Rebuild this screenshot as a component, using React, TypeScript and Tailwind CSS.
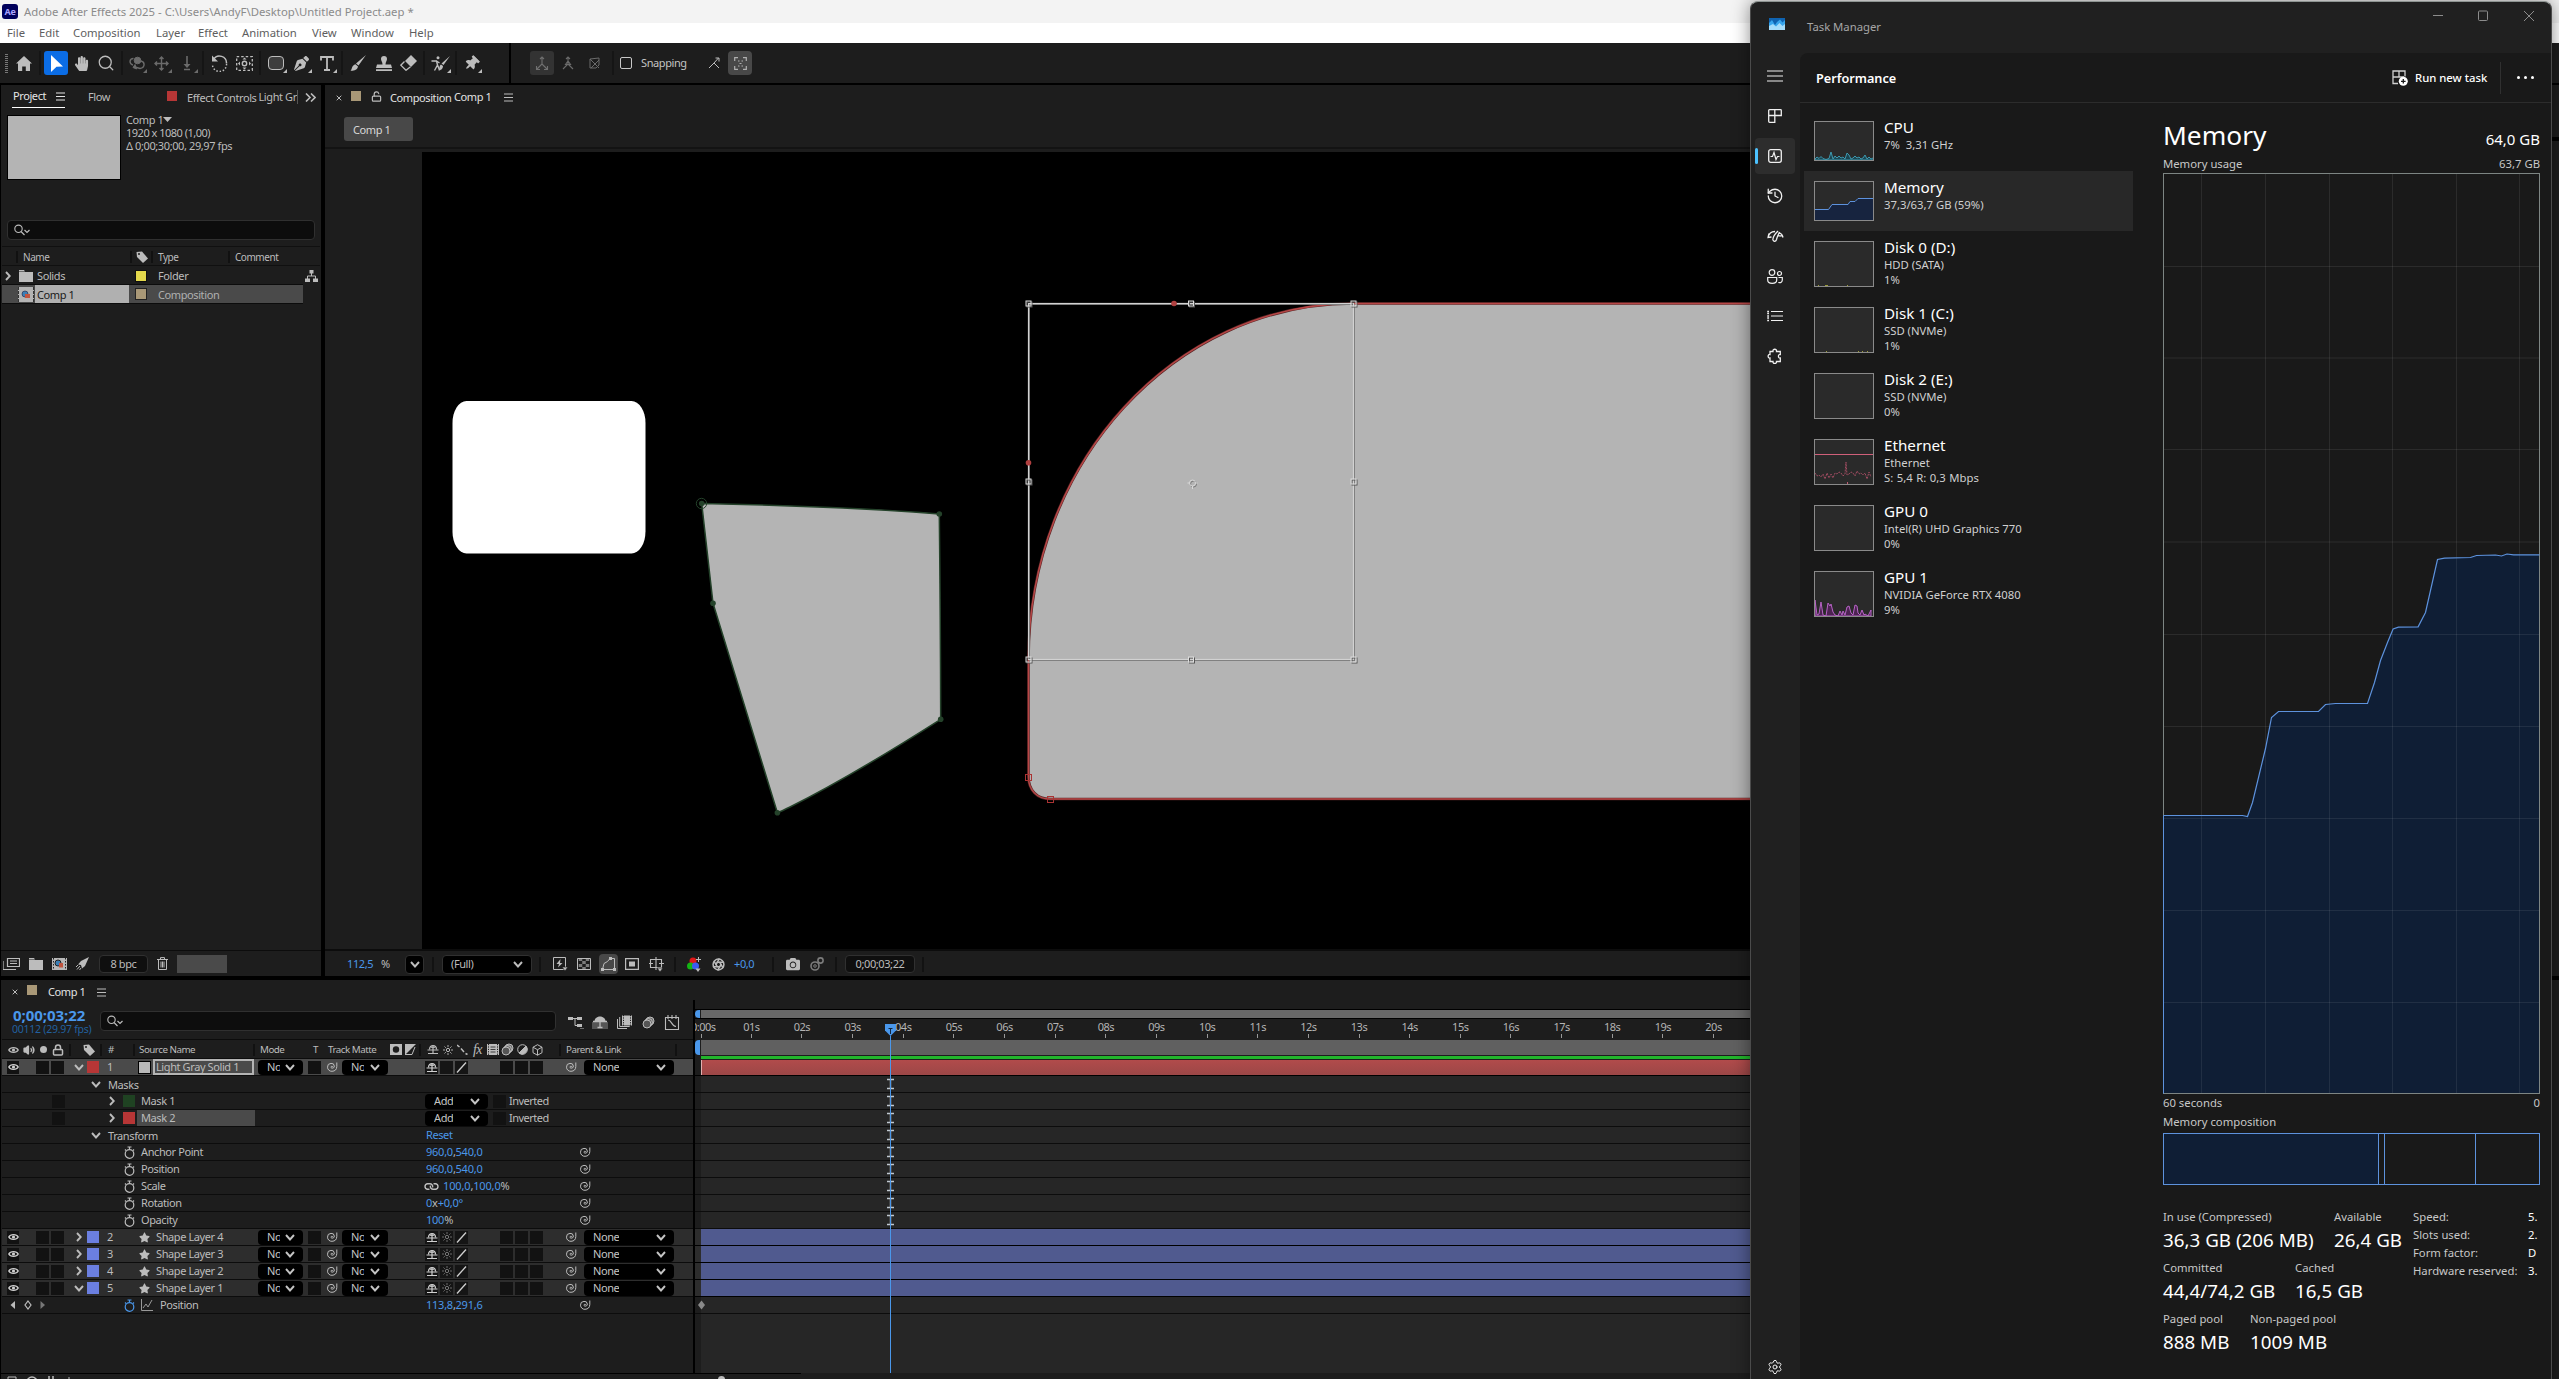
import type { ReactNode } from 'react';
import { FaHandPaper, FaPenNib, FaThumbtack, FaStar, FaCamera } from 'react-icons/fa';
import { Search, History, Settings, LockOpen, Lock, Volume2, Aperture, Link as LinkIcon } from 'lucide-react';

/* ---------- small shared pieces ---------- */

function Svg({ w, h, children }: { w: number; h: number; children: ReactNode }) {
  return (
    <svg width={w} height={h} viewBox={`0 0 ${w} ${h}`} fill="none" stroke="currentColor" className="block shrink-0">
      {children}
    </svg>
  );
}

const Menu3 = () => (
  <Svg w={9} h={9}><path d="M0 1h9M0 4.5h9M0 8h9" /></Svg>
);

const Tag = () => (
  <Svg w={12} h={12}>
    <path d="M0.5 1 L6 0.5 L12 7.5 L7 12 L1 6z" fill="currentColor" stroke="none" />
    <circle cx="3" cy="3" r="1" fill="#1d1d1d" stroke="none" />
  </Svg>
);

const Whip = () => (
  <Svg w={12} h={12}>
    <path d="M6.8 6.2a.9.9 0 1 0-1.2.8c1.6.6 2.9-.5 2.7-2A2.9 2.9 0 0 0 5 2.4 3.6 3.6 0 0 0 1.5 6.2 4.2 4.2 0 0 0 6 10.3 5 5 0 0 0 10.8 5.5V1.5" />
  </Svg>
);

const Eye = () => (
  <Svg w={11} h={10}>
    <path d="M0.8 5C2.5 1.8 8.5 1.8 10.2 5 8.5 8.2 2.5 8.2 0.8 5z" strokeWidth="1.4" />
    <circle cx="5.5" cy="5" r="1.6" fill="currentColor" stroke="none" />
  </Svg>
);

const Shy = () => (
  <Svg w={12} h={11}>
    <path d="M2.5 5.5C2.5 0.2 9.5 0.2 9.5 5.5" strokeWidth="1.2" />
    <path d="M0.5 6h11M6 1.5v7.5M1 9.5h10" strokeWidth="1.2" />
    <path d="M4 3.3h4" />
  </Svg>
);

const Sun = () => (
  <Svg w={10} h={10}>
    <circle cx="5" cy="5" r="1.7" />
    <path d="M5 0v2M5 8v2M0 5h2M8 5h2M1.5 1.5l1.3 1.3M7.2 7.2l1.3 1.3M8.5 1.5L7.2 2.8M2.8 7.2L1.5 8.5" strokeWidth=".9" />
  </Svg>
);

const Slash = () => (
  <Svg w={11} h={11}><path d="M1 10.5L10 0.5" strokeWidth="1.3" /></Svg>
);

const Film = () => (
  <Svg w={12} h={11}>
    <path d="M0 0h12v11H0z" fill="currentColor" stroke="none" />
    <path d="M1.5 0v11M10.5 0v11" stroke="#1d1d1d" strokeDasharray="1.2 1.2" />
    <path d="M3.5 3h5M3.5 5.5h5M3.5 8h5" stroke="#1d1d1d" strokeWidth=".8" />
  </Svg>
);

const Rings = () => (
  <Svg w={13} h={13}>
    <circle cx="8" cy="5" r="4" fill="#6b6b6b" />
    <circle cx="6.5" cy="6.5" r="4" />
    <circle cx="5" cy="8" r="4" fill="#555" />
  </Svg>
);

const Watch = () => (
  <Svg w={11} h={13}>
    <circle cx="5.5" cy="8" r="4.3" strokeWidth="1.2" />
    <path d="M5.5 3.5V1M3.5 1h4M1 3.5l1 1M10 3.5l-1 1" strokeWidth="1.2" />
  </Svg>
);

const Net = () => (
  <Svg w={13} h={12}>
    <path d="M4.5 0h4v3.5h-4zM0 8.5h5V12H0zM8 8.5h5V12H8z" fill="currentColor" stroke="none" />
    <path d="M6.5 3v3M2.5 9V6h8v3" />
  </Svg>
);

const Folder = () => (
  <Svg w={14} h={12}><path d="M0 0h5l1 1.5H0zM0 2h14v10H0z" fill="currentColor" stroke="none" /></Svg>
);

const Cross = () => (
  <Svg w={6} h={6}><path d="M.7.7l4.6 4.6M5.3.7L.7 5.3" /></Svg>
);

const Check = ({ className = '' }: { className?: string }) => <div className={`h-[13px] w-[13px] bg-[#121212] ${className}`} />;

const Chev = () => (
  <Svg w={10} h={7}><path d="M1 1l4 4.5L9 1" strokeWidth="1.9" /></Svg>
);

const ChevR = () => (
  <Svg w={6} h={10}><path d="M1 1l3.8 4L1 9" strokeWidth="1.9" /></Svg>
);

const Find = () => (
  <Svg w={17} h={12}>
    <circle cx="4.5" cy="4.8" r="3.7" strokeWidth="1.1" />
    <path d="M7 7.5l3.5 3.5M10.5 6l2.5 2.5L15.5 6" strokeWidth="1.2" />
  </Svg>
);

/* ---------- title, menu, toolbar ---------- */

const menus = [
  { label: 'File', w: 'w-[32px]' },
  { label: 'Edit', w: 'w-[34px]' },
  { label: 'Composition', w: 'w-[83px]' },
  { label: 'Layer', w: 'w-[42px]' },
  { label: 'Effect', w: 'w-[44px]' },
  { label: 'Animation', w: 'w-[70px]' },
  { label: 'View', w: 'w-[39px]' },
  { label: 'Window', w: 'w-[58px]' },
  { label: 'Help', w: 'w-[40px]' },
];

function Tool({ w, dim, more, on, children }: { w: string; dim?: boolean; more?: boolean; on?: boolean; children: ReactNode }) {
  return (
    <div className={`relative flex h-6 items-center justify-center ${w} ${on ? 'rounded-[3px] bg-[#0b6de6] text-white' : dim ? 'text-[#6b6b6b]' : 'text-[#bdbdbd]'}`}>
      {children}
      {more && (
        <span className="absolute right-[2px] bottom-[2px] border-b-4 border-l-4 border-b-current border-l-transparent" />
      )}
    </div>
  );
}

const ToolSep = ({ w }: { w: string }) => (
  <div className={`flex justify-center ${w}`}><div className="h-6 w-[2px] bg-[#151515]" /></div>
);

function Toolbar() {
  return (
    <div className="flex h-10 items-center bg-[#1d1d1d] *:shrink-0">
      <div className="flex w-3 justify-center">
        <Svg w={3} h={19}><path d="M1.5 0v19" strokeWidth="3" stroke="#777" strokeDasharray="1 1" /></Svg>
      </div>
      <Tool w="w-6"><Svg w={16} h={15}><path d="M8 0L16 7.5h-2V15H9.8v-4.5H6.2V15H2V7.5H0z" fill="currentColor" stroke="none" /></Svg></Tool>
      <ToolSep w="w-2" />
      <Tool w="w-6" on><Svg w={13} h={17}><path d="M1 0l12 11.5-6.5.3L1 17z" fill="currentColor" stroke="none" /></Svg></Tool>
      <Tool w="w-[26px]"><FaHandPaper size={15} /></Tool>
      <Tool w="w-[24px]"><Search size={18} strokeWidth={1.7} /></Tool>
      <ToolSep w="w-[7px]" />
      <Tool w="w-6" dim more>
        <Svg w={17} h={14}>
          <path d="M4 9C0 8 0 2.5 4.5 2.5M12 5c4 1 4.5 6.5-1 7.5L6 11" strokeWidth="1.4" />
          <circle cx="8.5" cy="4.5" r="3.3" fill="currentColor" /><path d="M6 8.5l-2 3 3.5 1.5z" fill="currentColor" />
        </Svg>
      </Tool>
      <Tool w="w-[25px]" dim more>
        <Svg w={15} h={15}><path d="M7.5 1v13M1 7.5h13M5.5 3l2-2 2 2M5.5 12l2 2 2-2M3 5.5l-2 2 2 2M12 5.5l2 2-2 2" strokeWidth="1.4" /></Svg>
      </Tool>
      <Tool w="w-[26px]" dim more>
        <Svg w={10} h={15}><path d="M5 0v11M2 13.5h6" strokeWidth="1.6" /><path d="M1.5 8L5 12l3.5-4z" fill="currentColor" stroke="none" /></Svg>
      </Tool>
      <ToolSep w="w-[6px]" />
      <Tool w="w-[26px]">
        <Svg w={17} h={17}>
          <path d="M2.5 4.5A7 7 0 0 1 15.5 8.5" strokeWidth="1.5" /><path d="M15.5 9A7 7 0 0 1 1.5 10" strokeWidth="1.5" strokeDasharray="1.5 1.8" />
          <path d="M1 0.5v6h6z" fill="currentColor" stroke="none" />
        </Svg>
      </Tool>
      <Tool w="w-[25px]">
        <Svg w={17} h={15}>
          <path d="M.7.7h15.6v13.6H.7z" strokeDasharray="2.5 2" strokeWidth="1.3" />
          <circle cx="8.5" cy="7.5" r="2.2" strokeWidth="1.4" />
          <path d="M6.5 3.5l2-2 2 2zM6.5 11.5l2 2 2-2zM4 5.5l-2 2 2 2zM13 5.5l2 2-2 2z" fill="currentColor" stroke="none" />
        </Svg>
      </Tool>
      <ToolSep w="w-[6px]" />
      <Tool w="w-[26px]" more><div className="h-[14px] w-4 rounded-[4px] border border-[#bdbdbd] bg-[#3d3d3d]" /></Tool>
      <Tool w="w-[25px]" more><FaPenNib size={15} /></Tool>
      <Tool w="w-[25px]" more><Svg w={14} h={15}><path d="M1 4.5V1h12v3.5M7 1v13M4 14h6" strokeWidth="1.8" /></Svg></Tool>
      <ToolSep w="w-[6px]" />
      <Tool w="w-[26px]"><Svg w={16} h={16}><path d="M16 0L8.5 10.5 6 8.5z M5.5 9.2l2.5 2.3C7.5 15 4 16 0.5 15.8 2 14.5 1.8 10 5.5 9.2z" fill="currentColor" stroke="none" /></Svg></Tool>
      <Tool w="w-[25px]"><Svg w={16} h={15}><path d="M5 3a3 3 0 1 1 6 0c0 1.5-1.5 3-1.500 5.500H15L16 12H0l1-3.500h5.500C6.500 6 5 4.500 5 3zM0 13.300h16V15H0z" fill="currentColor" stroke="none" /></Svg></Tool>
      <Tool w="w-[25px]"><Svg w={17} h={16}><path d="M11 0l6 6-6 6-6-6z" fill="currentColor" stroke="none" /><path d="M4.5 6.5L.8 10.2 6 15.3l4.5-3.5" strokeWidth="1.3" /></Svg></Tool>
      <ToolSep w="w-[6px]" />
      <Tool w="w-[26px]" more>
        <Svg w={19} h={15}>
          <circle cx="7" cy="1.8" r="1.5" fill="currentColor" stroke="none" />
          <path d="M0.5 5h5l1 4-3 5.5M6.5 9l2 5M5.5 5l3 2" strokeWidth="1.4" />
          <path d="M19 0L12.5 9 10.5 7.5zM10 8.5l2 1.5c0 3-2.5 4.5-4.5 4.5 1-1.5.5-5 2.5-6z" fill="currentColor" stroke="none" />
        </Svg>
      </Tool>
      <ToolSep w="w-[6px]" />
      <Tool w="w-[25px]" more><div className="rotate-45"><FaThumbtack size={15} /></div></Tool>
      <div className="ml-[25px] h-10 w-[2px] bg-black" />
      <div className="ml-[19px] flex h-6 w-6 items-center justify-center rounded-[3px] bg-[#333] text-[#707070]">
        <Svg w={14} h={14}><path d="M7 1v7L2 13M7 8l5 5M5 3l2-2 2 2M1.5 10v3.5H5M9 13.5h3.5V10" strokeWidth="1.1" /></Svg>
      </div>
      <Tool w="w-7" dim><Svg w={14} h={14}><path d="M7 1v7L2 13M7 8l5 5M4.5 8.5L7 5l2.5 3.5zM5 3l2-2 2 2" strokeWidth="1.1" /></Svg></Tool>
      <Tool w="w-6" dim><Svg w={13} h={14}><path d="M2 3l9 9M11 4l-8 8M2 3v9h6l3-3V2z" strokeWidth="1" /></Svg></Tool>
      <ToolSep w="w-[14px]" />
      <div className="h-3 w-3 rounded-[2px] border-[1.5px] border-[#c8c8c8]" />
      <span className="ml-[9px] w-[46px] text-[11px] tracking-[-0.4px] text-[#c4c4c4]">Snapping</span>
      <Tool w="w-[54px]"><Svg w={12} h={12}><path d="M1 11l5-5 5 5M6 6l4.5-5M7.5 1h3.5v3.5" /></Svg></Tool>
      <div className="-ml-[13px] flex h-6 w-6 items-center justify-center rounded-[4px] bg-[#484848] text-[#b0b0b0]">
        <Svg w={13} h={13}>
          <path d="M.7 4V.7H4M9 .7h3.3V4M12.3 9v3.3H9M4 12.3H.7V9M4 4h1.5M7.5 4H9M4 9h1.5M7.5 9H9M5.5 6.5h2" strokeWidth="1.2" />
        </Svg>
      </div>
    </div>
  );
}

/* ---------- project panel ---------- */

const Bar = ({ className = '' }: { className?: string }) => <div className={`h-3 w-[2px] bg-[#111] ${className}`} />;

function ProjectPanel() {
  return (
    <div className="ml-px flex w-80 shrink-0 flex-col bg-[#1d1d1d] text-[11px] leading-[14px] tracking-[-0.4px] whitespace-nowrap text-[#bcbcbc]">
      <div className="flex h-6 items-start *:shrink-0">
        <div className="ml-[11px] flex h-[23px] w-[53px] items-center justify-between border-b border-white pl-px text-[#e6e6e6]">
          <span>Project</span>
          <Menu3 />
        </div>
        <span className="ml-[23px] w-[79px] pt-[5px]">Flow</span>
        <div className="mt-[6px] h-[10px] w-[10px] bg-[#b73636]" />
        <span className="mt-[5px] ml-[10px] w-[111px] overflow-hidden border-r border-[#555]">
          <span className="relative top-px mr-[2px]">Effect Controls</span>Light Gr
        </span>
        <div className="mt-2 ml-[7px]"><Svg w={11} h={9}><path d="M1 0.5l4 4-4 4M6 0.5l4 4-4 4" strokeWidth="1.6" /></Svg></div>
      </div>

      <div className="mt-[6px] flex h-[105px] pl-[6px]">
        <div className="h-[65px] w-[114px] border border-black bg-[#b4b4b4]" />
        <div className="ml-[5px] flex flex-col leading-[13px] tracking-[-0.5px]">
          <span className="mt-[-2px] flex items-center tracking-[-0.4px]">
            Comp 1<Svg w={9} h={5}><path d="M0 0h9L4.5 5z" fill="currentColor" stroke="none" /></Svg>
          </span>
          <span>1920 x 1080 (1,00)</span>
          <span className="tracking-[-0.4px]">Δ 0;00;30;00, 29,97 fps</span>
        </div>
      </div>

      <div className="ml-[6px] flex h-5 w-[308px] items-center rounded-[4px] border border-[#303030] bg-[#0d0d0d] pl-[6px]"><Find /></div>

      <div className="mt-[6px] ml-px flex h-5 w-[318px] items-center border-y border-[#101010] pt-[2px] text-[10px] tracking-[-0.45px] *:shrink-0">
        <Bar className="ml-[14px]" />
        <span className="ml-[5px] w-[107px]">Name</span>
        <Bar />
        <div className="ml-1 w-[15px]"><Tag /></div>
        <Bar />
        <span className="ml-[5px] w-[70px]">Type</span>
        <Bar />
        <span className="ml-[5px]">Comment</span>
      </div>
      <div className="flex h-[18px] items-center pt-px *:shrink-0">
        <div className="ml-[4px] w-[14px]"><ChevR /></div>
        <Folder />
        <span className="ml-1 w-[99px]">Solids</span>
        <div className="h-[10px] w-[10px] bg-[#e3d84b] outline outline-[#101010]" />
        <span className="ml-[12px] w-[147px]">Folder</span>
        <Net />
      </div>
      <div className="ml-px flex h-[20px] w-[301px] items-center border-y border-[#0c0c0c] bg-[#4a4a4a] *:shrink-0">
        <div className="ml-4 flex h-[15px] w-4 items-center justify-center border-x border-dashed border-[#333] bg-[#b4b4b4]">
          <Svg w={10} h={9}><circle cx="4" cy="4" r="3" fill="#3b7fb5" stroke="#224" strokeWidth=".6" /><path d="M4 4h5v4H4z" fill="#c2553f" stroke="none" /></Svg>
        </div>
        <span className="ml-px flex h-[18px] w-[94px] items-center bg-[#b0b0b0] pt-px pl-[2px] text-[#1a1a1a]">Comp 1</span>
        <div className="ml-[7px] h-[10px] w-[10px] bg-[#a99877] outline outline-[#222]" />
        <span className="ml-[12px] pt-px text-[#b0b0b0]">Composition</span>
      </div>

      <div className="mt-auto flex h-[26px] items-center border-t border-[#0c0c0c] *:shrink-0">
        <div className="ml-[2px] w-[26px]"><Svg w={17} h={12}><path d="M4.5.5h12v8h-12zM0 3v8.5h13M7 3h7M7 5.5h7" strokeWidth="1.2" /></Svg></div>
        <div className="w-[23px]"><Folder /></div>
        <div className="w-6"><Svg w={15} h={12}><path d="M0 0h15v12H0z" fill="#b8b8b8" stroke="none" /><path d="M1.5 0v12M13.5 0v12" stroke="#222" strokeDasharray="1.5 1.5" /><circle cx="6" cy="5" r="3" fill="#3b7fb5" stroke="#222" /><path d="M7 5h4v4.5H7z" fill="#c2553f" stroke="none" /></Svg></div>
        <div className="w-[23px]"><Svg w={13} h={13}><path d="M13 0L5 4 2 7.5l3 .5 1 3.5 3-2.5z" fill="currentColor" stroke="none" /><path d="M4 9L1 12.5M2 8l-2 2M5 11l-1.5 2" /></Svg></div>
        <div className="flex h-[18px] w-[49px] items-center justify-center rounded-[4px] border border-[#303030] bg-[#0f0f0f]">8 bpc</div>
        <div className="flex w-[29px] justify-center"><Svg w={11} h={13}><path d="M0 2.5h11M3.5 2V.6h4V2M1.5 2.5v10h8v-10M4 4.5v6M5.5 4.5v6M7 4.5v6" /></Svg></div>
        <div className="h-[18px] w-[50px] bg-[#4a4a4a]" />
      </div>
    </div>
  );
}

/* ---------- composition viewer ---------- */

const greenPts = [[701.7, 503.5], [939.3, 514], [940.7, 719.3], [777.4, 812.7], [713, 603.3]];
const boxPts = [
  [1028.5, 303.5], [1191, 303.5], [1353.5, 303.5],
  [1028.5, 481.5], [1353.5, 481.5],
  [1028.5, 659.5], [1191, 659.5], [1353.5, 659.5],
];
const maskPath = 'M1028.5 777V659.5C1028.5 462.7 1174 303.5 1353.5 303.5H2544V799H1050C1037 799 1028.5 790 1028.5 777z';

function Viewer() {
  return (
    <svg width="2122" height="797" viewBox="422 152 2122 797" fill="none" className="block bg-black">
      <rect x="452.5" y="401" width="193" height="152.5" rx="14" ry="22" fill="#fff" />
      <path d="M701.7 503.5Q840 506 939.3 514Q940.5 620 940.7 719.3Q850 777 790 807Q782 811 777.4 812.7L713 603.3z" fill="#b4b4b4" stroke="#24422a" strokeWidth="1.5" />
      {greenPts.map(([x, y]) => <circle key={x} cx={x} cy={y} r="2.8" fill="#24422a" />)}
      <circle cx="701.5" cy="503.5" r="5.2" stroke="#24422a" />

      <path d={maskPath} fill="#b4b4b4" stroke="#5a2626" strokeWidth="2.6" />
      <path d={maskPath} stroke="#b84747" strokeWidth="1.4" />
      <rect x="1029.5" y="304.5" width="325" height="356" stroke="#777" />
      <rect x="1028.5" y="303.5" width="325" height="356" stroke="#d2d2d2" strokeWidth="1.2" />
      {boxPts.map(([x, y]) => (
        <g key={`${x}-${y}`}>
          <rect x={x - 1.5} y={y - 1.5} width="5" height="5" stroke="#555" />
          <rect x={x - 2.5} y={y - 2.5} width="5" height="5" stroke="#dcdcdc" />
        </g>
      ))}
      <circle cx="1174" cy="303.5" r="2.8" fill="#b04040" />
      <circle cx="1028.5" cy="462.7" r="2.8" fill="#b04040" />
      <rect x="1025.5" y="774.5" width="6" height="6" stroke="#a33" />
      <rect x="1047.5" y="796.5" width="6" height="6" stroke="#a33" />
      <circle cx="1193.5" cy="484" r="3" stroke="#777" />
      <circle cx="1192.5" cy="483" r="3" stroke="#d8d8d8" />
      <path d="M1187.5 483h2M1195.5 483h2M1192.5 486v3" stroke="#d8d8d8" />
    </svg>
  );
}

const FootSep = ({ w }: { w: string }) => (
  <div className={`flex justify-center ${w}`}><div className="h-[15px] w-[2px] bg-[#121212]" /></div>
);
const Slot = ({ children, on }: { children: ReactNode; on?: boolean }) => (
  <div className="flex w-6 justify-center">
    <div className={`flex h-5 w-[19px] items-center justify-center rounded-[4px] ${on ? 'bg-[#484848]' : ''}`}>{children}</div>
  </div>
);

function CompPanel() {
  return (
    <div className="ml-1 flex w-[2219px] shrink-0 flex-col bg-[#1d1d1d] text-[11px] leading-[14px] tracking-[-0.4px] whitespace-nowrap text-[#bcbcbc]">
      <div className="flex h-6 items-center *:shrink-0">
        <div className="ml-[11px] w-[15px] pt-px"><Cross /></div>
        <div className="mb-[2px] h-[10px] w-[10px] bg-[#a99877]" />
        <div className="mb-[2px] ml-[10px] w-[19px]"><LockOpen size={11} strokeWidth={2.6} /></div>
        <span className="relative top-px w-[64px] text-[#e2e2e2]">Composition</span>
        <span className="w-[50px] text-[#e2e2e2]">Comp 1</span>
        <Menu3 />
      </div>
      <div className="mt-2 ml-[19px] flex h-6 w-[69px] items-center rounded-[3px] bg-[#484848] pt-px pl-[9px] text-[#d8d8d8]">Comp 1</div>
      <div className="mt-[6px] h-[2px] bg-[#131313]" />
      <div className="flex h-[800px] pt-[3px] pl-[97px]"><Viewer /></div>
      <div className="flex h-[27px] items-center border-t-2 border-[#0c0c0c] pt-px *:shrink-0">
        <span className="ml-[22px] w-[34px] text-[#4a97ea]">112,5</span>
        <span className="w-6">%</span>
        <div className="flex h-[19px] w-[19px] items-center justify-center rounded-[4px] border border-[#303030] bg-black"><Chev /></div>
        <FootSep w="w-[18px]" />
        <div className="flex h-[19px] w-[90px] items-center justify-between rounded-[4px] border border-[#303030] bg-black pr-[8px] pl-2"><span>(Full)</span><Chev /></div>
        <FootSep w="w-[16px]" />
        <Slot><Svg w={15} h={14}><path d="M.5.5h12v12H.5z" /><path d="M7.5 2L3.5 7h2.5l-1 3.5L9.5 6H7z" fill="currentColor" stroke="none" /><path d="M9 10h6l-3 4z" fill="currentColor" stroke="#1d1d1d" strokeWidth=".7" /></Svg></Slot>
        <Slot><Svg w={14} h={12}><path d="M.5.5h13v11H.5z" /><path d="M3.5 0v12M10.5 0v12" strokeWidth="3.5" strokeDasharray="3 3" opacity=".6" /><path d="M7 0v12" strokeWidth="3.5" strokeDasharray="3 3" strokeDashoffset="3" opacity=".6" /></Svg></Slot>
        <Slot on><Svg w={15} h={14}><path d="M1.5 12.5L3 6.5Q7 5 9 1.5h4.5v11z" /><path d="M0 11h3v3H0zM12 11h3v3h-3zM8 0h3v3H8z" fill="currentColor" stroke="none" /></Svg></Slot>
        <Slot><Svg w={14} h={12}><path d="M.6.6h12.8v10.8H.6z" strokeWidth="1.2" /><path d="M4 3.5h6v5H4z" fill="currentColor" stroke="none" /></Svg></Slot>
        <Slot><Svg w={15} h={15}><path d="M1.5 2.5h11v8h-11zM7 0v13M0 6.5h4M10 6.5h5" strokeWidth="1.1" /><path d="M8 11h6l-3 4z" fill="currentColor" stroke="#1d1d1d" strokeWidth=".7" /></Svg></Slot>
        <FootSep w="w-[14px]" />
        <Slot><Svg w={14} h={15}><circle cx="6" cy="4" r="3.5" fill="#e01818" stroke="none" /><circle cx="3.5" cy="9" r="3.5" fill="#14b414" stroke="none" /><circle cx="8.5" cy="9" r="3.5" fill="#3c5cf0" stroke="none" /><path d="M11.5 0v5M9 2.5h5" /><path d="M8.5 11.5h5l-2.5 3.5z" fill="currentColor" stroke="none" /></Svg></Slot>
        <Slot><Aperture size={13} strokeWidth={2.8} /></Slot>
        <span className="ml-1 w-[31px] text-[#4a97ea]">+0,0</span>
        <FootSep w="w-[16px]" />
        <Slot><FaCamera size={14} /></Slot>
        <div className="text-[#7b7b7b]"><Slot><Svg w={14} h={14}><circle cx="5" cy="9" r="4" strokeWidth="1.6" /><circle cx="5" cy="9" r="1.3" /><circle cx="10.5" cy="3.5" r="2.6" strokeWidth="1.6" /></Svg></Slot></div>
        <FootSep w="w-[14px]" />
        <div className="ml-[2px] flex h-[18px] w-[70px] items-center justify-center rounded-[4px] border border-[#303030] bg-[#0f0f0f]">0;00;03;22</div>
        <FootSep w="w-[16px]" />
      </div>
    </div>
  );
}

/* ---------- timeline ---------- */

const Drop = ({ w, children }: { w: string; children: ReactNode }) => (
  <div className={`flex h-[15px] items-center justify-between rounded-[4px] bg-black pr-[8px] pl-[9px] text-[#c4c4c4] ${w}`}>
    <span className="overflow-hidden">{children}</span><Chev />
  </div>
);

const rowCls = 'flex h-[17px] items-center border-b border-[#0c0c0c] *:shrink-0';

function LayerRow({ n, name, first, open }: { n: number; name: string; first?: boolean; open?: boolean }) {
  return (
    <div className={`${rowCls} ${first ? 'bg-[#4a4a4a]' : 'bg-[#2d2d2d]'}`}>
      <div className="ml-[5px] flex h-[13px] w-3 items-center justify-center bg-[#121212] text-[#d0d0d0]"><Eye /></div>
      <Check className="ml-[17px]" />
      <Check className="ml-[2px]" />
      <div className="ml-[6px] flex w-[17px] justify-center">{open ? <Chev /> : <ChevR />}</div>
      <div className={`h-3 w-3 ${first ? 'bg-[#b73636]' : 'bg-[#6b7fe0]'}`} />
      <span className="w-[39px] pl-[8px]">{n}</span>
      {first
        ? <div className="h-[13px] w-[13px] border border-black bg-[#b8b8b8]" />
        : <div className="flex w-[13px] justify-center"><FaStar size={11} /></div>}
      <span className={`ml-[2px] w-[101px] ${first ? 'h-4 border-2 border-[#b4b4b4] pl-px leading-[12px]' : 'pl-[3px]'}`}>{name}</span>
      <div className="ml-1"><Drop w="w-[45px]"><span className="block w-[13px] overflow-hidden">No</span></Drop></div>
      <Check className="ml-[5px]" />
      <div className="ml-[5px] w-4"><Whip /></div>
      <Drop w="w-[46px]"><span className="block w-[13px] overflow-hidden">No</span></Drop>
      <div className="ml-[37px] flex gap-[2px] *:flex *:h-[13px] *:w-[13px] *:items-center *:justify-center *:bg-[#151515]">
        <div className="text-[#d0d0d0]"><Shy /></div>
        <div className="text-[#777]">{!first && <Sun />}</div>
        <div className="text-[#d0d0d0]"><Slash /></div>
      </div>
      <div className="ml-8 flex gap-[2px]"><Check /><Check /><Check /></div>
      <div className="ml-[22px] w-[19px]"><Whip /></div>
      <Drop w="w-[90px]">None</Drop>
    </div>
  );
}

function MaskRow({ name, color, on }: { name: string; color: string; on?: boolean }) {
  return (
    <div className={rowCls}>
      <Check className="ml-[50px]" />
      <div className="ml-10 w-[18px] pl-[4px]"><ChevR /></div>
      <div className={`h-3 w-3 ${color}`} />
      <span className={`ml-[2px] h-4 w-[118px] pl-[4px] leading-4 ${on ? 'bg-[#4a4a4a]' : ''}`}>{name}</span>
      <div className="ml-[170px]"><Drop w="w-[63px]">Add</Drop></div>
      <div className="mr-[3px] ml-[5px]"><Check /></div>
      <span className="tracking-[-0.5px]">Inverted</span>
    </div>
  );
}

const V = ({ children }: { children: ReactNode }) => <span className="text-[#4a97ea]">{children}</span>;

function PropRow({ name, children, keyed, link }: { name: string; children: ReactNode; keyed?: boolean; link?: boolean }) {
  return (
    <div className={rowCls}>
      <div className="ml-[7px] flex w-[115px] gap-[7px]">
        {keyed && (
          <>
            <Svg w={8} h={10}><path d="M6 1v8L1.5 5z" fill="currentColor" stroke="none" /></Svg>
            <Svg w={8} h={10}><path d="M4 1l3 4-3 4-3-4z" strokeWidth="1.2" /></Svg>
            <Svg w={8} h={10}><path d="M1.5 1v8L6 5z" fill="#777" stroke="none" /></Svg>
          </>
        )}
      </div>
      <div className={`w-[17px] ${keyed ? 'text-[#4a97ea]' : ''}`}><Watch /></div>
      {keyed && <div className="w-[19px]"><Svg w={12} h={12}><path d="M.5 0v11.5H12M2 9l3-4 2 3 4-7" stroke="#999" /></Svg></div>}
      <span className={keyed ? 'w-[266px]' : 'w-[285px]'}>{name}</span>
      <span className="flex w-[153px] items-center">
        {link && <span className="-ml-px w-[18px]"><LinkIcon size={13} strokeWidth={2.6} className="rotate-45" /></span>}
        <span className={link ? 'tracking-[-0.15px]' : 'tracking-[-0.25px]'}>{children}</span>
      </span>
      <Whip />
    </div>
  );
}

function GroupRow({ name, children }: { name: string; children?: ReactNode }) {
  return (
    <div className={rowCls}>
      <div className="ml-[89px] w-[17px]"><Chev /></div>
      <span className="w-[318px] pt-px">{name}</span>
      {children}
    </div>
  );
}

function TimelineHeader() {
  return (
    <div className="flex h-5 items-center border-y border-[#0c0c0c] pt-px text-[9.8px] tracking-[-0.5px] *:shrink-0">
      <div className="ml-[6px] w-[15px]"><Eye /></div>
      <div className="w-[17px]"><Volume2 size={12} strokeWidth={2.5} fill="currentColor" /></div>
      <div className="w-[12px]"><div className="h-[7px] w-[7px] rounded-full bg-[#bcbcbc]" /></div>
      <div className="w-[17px]"><Lock size={12} strokeWidth={3} /></div>
      <Bar />
      <div className="ml-3 w-[17px]"><Tag /></div>
      <Bar />
      <span className="ml-[6px] w-[25px]">#</span>
      <Bar />
      <span className="ml-[4px] w-[114px] pt-px">Source Name</span>
      <Bar />
      <span className="ml-[5px] w-[53px] pt-px">Mode</span>
      <span className="w-[15px] pt-px">T</span>
      <span className="w-[62px] pt-px">Track Matte</span>
      <Svg w={26} h={11}>
        <path d="M0 0h12v11H0z" fill="currentColor" stroke="none" /><circle cx="6" cy="5.5" r="3.2" fill="#1d1d1d" stroke="none" />
        <path d="M15 0h11L15 11z" fill="currentColor" stroke="none" /><path d="M15 10.5h7L25 3" />
      </Svg>
      <Bar className="ml-[3px]" />
      <div className="ml-1 flex items-center *:flex *:w-[15px] *:justify-center">
        <div><Shy /></div>
        <div><Sun /></div>
        <div><Svg w={11} h={11}><path d="M0 1l2.5 2M4 4.5L7 8M8.5 9.5l2 1" strokeWidth="1.5" /></Svg></div>
        <div className="font-['Liberation_Serif',serif] text-[14px] leading-none italic">fx</div>
        <div><Film /></div>
        <div><Rings /></div>
        <div><Svg w={11} h={11}><circle cx="5.5" cy="5.5" r="4.8" /><path d="M9 2A5 5 0 0 1 2 9z" fill="currentColor" /></Svg></div>
        <div><Svg w={11} h={12}><path d="M5.5.7l4.5 2.5v5.5l-4.5 2.5L1 8.7V3.2zM1 3.2l4.5 2.5L10 3.2M5.5 5.7v5.5" /></Svg></div>
      </div>
      <Bar className="ml-[14px]" />
      <span className="ml-[5px] w-[109px] pt-px">Parent &amp; Link</span>
      <Bar />
    </div>
  );
}

const seconds = Array.from({ length: 20 }, (_, i) => `${String(i + 1).padStart(2, '0')}s`);

function Tracks() {
  return (
    <div className="relative flex flex-1 flex-col overflow-hidden border-l-2 border-black">
      <div className="mt-[9px] box-content flex h-2 border-y border-black">
        <div className="mr-px w-[5px] rounded-l-[5px] bg-[#4a97ea]" />
        <div className="flex-1 bg-[#686868]" />
      </div>
      <div className="flex h-[21px] text-[11px] leading-[15px] tracking-[-0.5px] text-[#b4b4b4] *:shrink-0">
        <div className="flex w-[31px] flex-col">
          <span className="-ml-[4px]">0:00s</span>
          <div className="ml-[6px] h-1 w-px bg-[#999]" />
        </div>
        {seconds.map((s) => (
          <div key={s} className="flex w-[50.65px] flex-col items-center">
            <span>{s}</span>
            <div className="h-1 w-px bg-[#999]" />
          </div>
        ))}
      </div>
      <div className="flex h-[15px]">
        <div className="mr-px w-[5px] rounded-l-[4px] bg-[#4a97ea]" />
        <div className="flex-1 bg-[#606060]" />
      </div>
      <div className="mt-px ml-[6px] h-[3px] bg-[#22b52c]" />
      <div className="flex-1 bg-[#1d1d1d]">
        <div className="h-[17px] border-b border-black pt-px">
          <div className="ml-[6px] h-[15px] border-l border-[#e0b0b0] bg-linear-to-b from-[#b14b4b] to-[#9c4747]" />
        </div>
        {Array.from({ length: 9 }, (_, i) => (
          <div key={i} className="h-[17px] border-b border-[#0c0c0c] pl-[6px]"><div className="h-4 bg-[#262626]" /></div>
        ))}
        {Array.from({ length: 4 }, (_, i) => (
          <div key={i} className="h-[17px] border-b border-black bg-[#2d2d2d] pl-[6px]"><div className="h-4 bg-[#505a8f]" /></div>
        ))}
        <div className="h-[17px] border-b border-[#0c0c0c] pl-[6px]">
          <div className="h-4 bg-[#262626] pt-[3px] text-[#8a8a8a]">
            <div className="-ml-[4px]"><Svg w={9} h={10}><path d="M4.5 0.5L8 5l-3.5 4.5L1 5z" fill="currentColor" stroke="none" /></Svg></div>
          </div>
        </div>
        <div className="ml-[6px] h-[59px] bg-[#262626]" />
      </div>

      {/* current time indicator */}
      <div className="absolute top-[24px] left-[190px]">
        <Svg w={11} h={349}>
          <path d="M0 0h11v6.5L5.5 12 0 6.5z" fill="#4a97ea" stroke="none" />
          <path d="M3.5 4.5h4M5.5 4.5V10" stroke="#12243a" />
          {Array.from({ length: 9 }, (_, i) => (
            <path key={i} d={`M2 ${55.5 + i * 17}h7M2 ${64.5 + i * 17}h7M5.5 ${55.5 + i * 17}v9`} stroke="#c0c8d0" strokeWidth="1.4" />
          ))}
          <path d="M5.5 12v337" stroke="#4a97ea" />
        </Svg>
      </div>
    </div>
  );
}

function Timeline() {
  return (
    <div className="mt-1 ml-px flex h-[399px] flex-col bg-[#1d1d1d] text-[11px] leading-[14px] tracking-[-0.4px] whitespace-nowrap text-[#bcbcbc]">
      <div className="flex h-5 items-center pt-[4px] *:shrink-0">
        <div className="ml-[11px] w-[15px]"><Cross /></div>
        <div className="mb-1 h-[10px] w-[10px] bg-[#a99877]" />
        <span className="ml-[11px] w-[49px] text-[#e2e2e2]">Comp 1</span>
        <Menu3 />
      </div>
      <div className="flex h-[373px]">
        <div className="w-[692px] shrink-0 pl-px">
          <div className="flex h-[39px] *:shrink-0">
            <div className="flex w-[98px] flex-col pt-[7px] pl-[11px]">
              <span className="text-[15px] leading-4 font-bold tracking-[-0.05px] text-[#4a97ea]">0;00;03;22</span>
              <span className="-ml-px text-[10.5px] leading-3 tracking-[-0.25px] text-[#22609f]">00112 (29.97 fps)</span>
            </div>
            <div className="mt-[11px] flex h-5 w-[456px] items-center rounded-[4px] border border-[#303030] bg-[#0d0d0d] pl-[6px]"><Find /></div>
            <div className="mt-[14px] ml-[8px] flex h-4 items-center *:flex *:w-6 *:justify-center">
              <div><Svg w={16} h={13}><path d="M0 1h5v3H0zM9 1h5v3H9zM9 8h5v3H9z" fill="currentColor" stroke="none" /><path d="M4 2.5h6M7 2.5v7h3M12 13l4 0" /></Svg></div>
              <div><Svg w={16} h={14}><path d="M0 7h16v7H0z" fill="#555" stroke="none" /><path d="M2.5 6C3 0 13 0 13.5 6z" fill="currentColor" stroke="none" /><path d="M1 6.5h14M8 6v7M5.5 12.5h5" strokeWidth="1.3" /></Svg></div>
              <div><Svg w={15} h={14}><path d="M5 .5h10v10H5z" fill="currentColor" stroke="none" /><path d="M.5 4v9.5H10M2.7 2v9.5h10" /><path d="M6.5 0v11M13.5 0v11" stroke="#1d1d1d" strokeDasharray="1.2 1.2" /></Svg></div>
              <div><Rings /></div>
              <div><Svg w={16} h={15}><path d="M1.5 2.5h13v12h-13zM4 5c4 0 3 6 8 6.5M4 0v4M8 0v4M12 0v4" strokeWidth="1.1" /></Svg></div>
            </div>
          </div>
          <TimelineHeader />
          <LayerRow n={1} name="Light Gray Solid 1" first open />
          <GroupRow name="Masks" />
          <MaskRow name="Mask 1" color="bg-[#1f4222]" />
          <MaskRow name="Mask 2" color="bg-[#b73636]" on />
          <GroupRow name="Transform"><V>Reset</V></GroupRow>
          <PropRow name="Anchor Point"><V>960,0</V>,<V>540,0</V></PropRow>
          <PropRow name="Position"><V>960,0</V>,<V>540,0</V></PropRow>
          <PropRow name="Scale" link><V>100,0</V>,<V>100,0</V>%</PropRow>
          <PropRow name="Rotation"><V>0</V>x<V>+0,0°</V></PropRow>
          <PropRow name="Opacity"><V>100</V>%</PropRow>
          <LayerRow n={2} name="Shape Layer 4" />
          <LayerRow n={3} name="Shape Layer 3" />
          <LayerRow n={4} name="Shape Layer 2" />
          <LayerRow n={5} name="Shape Layer 1" open />
          <PropRow name="Position" keyed><V>113,8</V>,<V>291,6</V></PropRow>
        </div>
        <Tracks />
        <div className="w-[14px] shrink-0 bg-[#1d1d1d]" />
      </div>
      <div className="flex h-[6px] items-start overflow-hidden">
        <div className="flex w-[800px] gap-[6px] border-t border-black pt-[2px] pl-[6px]">
          <Svg w={13} h={12}><path d="M1 1h8v8H1zM4 4h8v8H4z" /></Svg>
          <Svg w={13} h={12}><circle cx="6" cy="6" r="5" strokeWidth="1.5" /></Svg>
          <Svg w={13} h={12}><path d="M4 0v12M8 0v12" strokeWidth="1.5" /></Svg>
          <Svg w={13} h={12}><path d="M0 4h6M5 1v6" /></Svg>
          <div className="ml-[635px] h-[7px] w-[7px] shrink-0 rounded-full bg-[#bcbcbc]" />
        </div>
      </div>
    </div>
  );
}

/* ---------- task manager ---------- */

function Mini({ h, children }: { h: number; children?: ReactNode }) {
  return (
    <svg width="60" height={h} viewBox={`0 0 60 ${h}`} fill="none" className="block shrink-0 bg-[#2a2a2a]">
      {children}
      <rect x=".5" y=".5" width="59" height={h - 1} stroke="#8a8a8a" />
    </svg>
  );
}

const perf = [
  { name: 'CPU', a: '7%  3,31 GHz', chart: (
    <Mini h={40}><path d="M1 38l2-2 2 1.5 2-2 2 2 3 1 3-1 2-6.5 2 7 2-3 2 2 2-2 2 2 2-1 2 2 2-6 2 2 2 4 2-1 2-2 2 2 2-1 2 2 2-1 2-3 2 4 2-2 2 2 2-1 2 1V39H1z" fill="#1c444f" stroke="#3fa3bb" strokeWidth=".9" /></Mini>
  ) },
  { name: 'Memory', a: '37,3/63,7 GB (59%)', on: true, chart: (
    <Mini h={40}><path d="M.5 39.5V28.5h14L18 23.5h16l2-3h5l3-3h16v22z" fill="#17243f" stroke="#5d92dd" /></Mini>
  ) },
  { name: 'Disk 0 (D:)', a: 'HDD (SATA)', b: '1%', chart: <Mini h={46}><path d="M4 44.5h1M11 44.5h3M33 44.5h1" stroke="#9c9c3a" /></Mini> },
  { name: 'Disk 1 (C:)', a: 'SSD (NVMe)', b: '1%', chart: <Mini h={46}><path d="M12 44.5h1M44 44.5h1M48 44.5h1M53 44.5h1" stroke="#9c9c3a" /></Mini> },
  { name: 'Disk 2 (E:)', a: 'SSD (NVMe)', b: '0%', chart: <Mini h={46} /> },
  { name: 'Ethernet', a: 'Ethernet', b: 'S: 5,4 R: 0,3 Mbps', chart: (
    <Mini h={46}>
      <path d="M1 15.5h58" stroke="#d0607a" />
      <path d="M1 34l2 3 2-1 2 2 2-3 2 5 2-6 2 5 2-4 2 4 2-5 2 1 2-2 2 1 2 3 2-2 1-12 1 13 2-1 2-2 2 1 2 3 2-5 2 3 2-1 2 2 2-2 2 6 2-7 2 5" stroke="#a04c61" strokeDasharray="2 1" />
      <path d="M33.5 43v2" stroke="#c05a72" />
    </Mini>
  ) },
  { name: 'GPU 0', a: 'Intel(R) UHD Graphics 770', b: '0%', chart: <Mini h={46} /> },
  { name: 'GPU 1', a: 'NVIDIA GeForce RTX 4080', b: '9%', chart: (
    <Mini h={46}><path d="M1 45V29l2 15 2-1 2-12 2 13 3 1 2-13 2 3 1-2 2 8 2 3 3 1 2-5 2 4 1-4 2 4 2-8 2-1 2 7 2 2 2-10 2 1 1 7 2 2 2-5 2 5 1-1 3 2 3-6V45z" fill="#4d2352" stroke="#b763c6" strokeWidth="1" /></Mini>
  ) },
];

const NavItem = ({ children, on }: { children: ReactNode; on?: boolean }) => (
  <div className={`relative mb-1 flex h-9 w-10 shrink-0 items-center justify-center rounded-[4px] text-[#f0f0f0] ${on ? 'bg-[#2d2d2d]' : ''}`}>
    {on && <span className="absolute top-[10px] left-0 h-4 w-[3px] rounded-full bg-[#4cc2ff]" />}
    {children}
  </div>
);

const usage = 'M2163 815H2242L2247 816 2252 802 2265 748 2271 717 2278 711H2318L2325 704 2335 703H2367L2374 682 2380 660 2387 642 2392.6 628.4 2398 626.7 2417.6 626.3 2425 612 2437 559 2444 557.7 2470 557 2476 555 2495 554.5 2501 555.5 2506.5 553.5 2513 554.3H2539';

function MemoryChart() {
  return (
    <svg width="377" height="921" viewBox="2162.5 172.5 377 921" fill="none" className="block">
      <path d={`${usage}V1093H2163z`} fill="#0f1e35" />
      <path d="M2201 173V1093M2265 173V1093M2329 173V1093M2392 173V1093M2456 173V1093M2519 173V1093M2163 266H2539M2163 357.5H2539M2163 449H2539M2163 541.5H2539M2163 634H2539M2163 726H2539M2163 818H2539M2163 910H2539M2163 1002H2539" stroke="#fff" strokeOpacity=".08" />
      <rect x="2163" y="173" width="376" height="920" stroke="#7d8583" />
      <path d="M2163 1093V815" stroke="#5d92dd" />
      <path d={usage} stroke="#5d92dd" strokeWidth="1.2" />
    </svg>
  );
}

function Stat({ label, value, w }: { label: string; value: string; w: string }) {
  return (
    <div className={`flex flex-col ${w}`}>
      <span className="h-[18px] text-[#c8c8c8]">{label}</span>
      <span className="text-[18.8px] leading-[26px] text-white">{value}</span>
    </div>
  );
}

const specs = [['Speed:', '5.'], ['Slots used:', '2.'], ['Form factor:', 'D'], ['Hardware reserved:', '3.']];

function TaskManager() {
  return (
    <div className="absolute top-px left-[1750px] flex h-[1390px] w-[802px] flex-col rounded-t-[8px] border border-[#4b4b4b] border-t-[#8e9492] bg-[#202020] text-[11.3px] leading-4 whitespace-nowrap text-[#d0d0d0] shadow-[0_0_18px_rgba(0,0,0,0.45)]">
      <div className="flex h-[51px] shrink-0 *:shrink-0">
        <div className="mt-4 ml-[18px]">
          <svg width="16" height="12" viewBox="0 0 16 12"><path d="M0 0h16v12H0z" fill="#0f63b0" /><path d="M0 5l3-3 3 5 2-3 3-2.5 2.5 3L16 2v10H0z" fill="#37a5ec" /><path d="M0 8l4-2 3 2.5L10.5 5l3 3 2.5-2v6H0z" fill="#a5ddfb" /></svg>
        </div>
        <span className="mt-[17px] ml-[22px] w-[626px] text-[#a6a6a6]">Task Manager</span>
        <div className="mt-2 flex gap-[35px] text-[#8c8c8c]">
          <Svg w={10} h={12}><path d="M0 5.5h10" /></Svg>
          <Svg w={10} h={12}><rect x=".5" y="1" width="9" height="9.5" rx="1" /></Svg>
          <Svg w={12} h={12}><path d="M1 1l10 10M11 1L1 11" /></Svg>
        </div>
      </div>
      <div className="flex flex-1">
        <div className="flex w-[49px] shrink-0 flex-col pt-[5px] pl-1">
          <NavItem><Svg w={16} h={12}><path d="M0 1h16M0 6h16M0 11h16" /></Svg></NavItem>
          <NavItem><Svg w={14} h={14}><path d="M1.5.7h11q.8 0 .8.8V6.5H.7v5.8q0 1 1 1H6.8V.7M.7 6.5V1.5q0-.8.8-.8" strokeWidth="1.3" /></Svg></NavItem>
          <NavItem on><Svg w={14} h={14}><rect x=".7" y=".7" width="12.6" height="12.6" rx="2" strokeWidth="1.3" /><path d="M2.5 7.5h2L6 3.5 8 10.5l1.5-3h2" strokeWidth="1.2" /></Svg></NavItem>
          <NavItem><History size={18} strokeWidth={1.7} /></NavItem>
          <NavItem><Svg w={17} h={12}><path d="M1 7.5C2 3 5 1.5 8 1.5M12 2.5c2 .8 3.5 2.5 4 5M2 3.5l-1 4 3.5-.5M11 1c-3 3-5.5 7-5 9 .8 2 3 1.5 3.5-.5C10 7 11.5 4 12.5 2M10.5 5.5l4 .5" strokeWidth="1.3" /></Svg></NavItem>
          <NavItem><Svg w={16} h={15}><circle cx="5" cy="3.5" r="2.8" strokeWidth="1.2" /><circle cx="12.5" cy="4.5" r="2" strokeWidth="1.2" /><path d="M.7 8.5h9v2.5c0 4.5-9 4.5-9 0zM11.5 8.5h3.8V11c0 2-1.5 3-4 2.5" strokeWidth="1.2" /></Svg></NavItem>
          <NavItem><Svg w={16} h={12}><path d="M4 1.5h12M4 6h12M4 10.5h12" strokeWidth="1.2" /><path d="M.2 1.5H2M.2 6H2M.2 10.5H2M.2 3.5H2M.2 8H2" strokeWidth="1.5" /></Svg></NavItem>
          <NavItem><Svg w={16} h={16}><path d="M3 3.5h3c-.5-3 4-3 3.5 0h3.8v3c-2.5-.5-2.5 4 0 3.5v3.5H9.5c.5 2.5-4 2.5-3.5 0H3V10C.5 10.5.5 6 3 6.5z" strokeWidth="1.3" /></Svg></NavItem>
          <div className="mt-[971px]"><NavItem><Settings size={16} strokeWidth={1.5} /></NavItem></div>
        </div>
        <div className="flex flex-1 flex-col rounded-tl-[8px] bg-[#191919]">
          <div className="flex h-[50px] items-center border-b-[1.5px] border-[#2c2c2c] *:shrink-0">
            <span className="ml-4 w-[576px] text-[12.7px] font-semibold text-white">Performance</span>
            <Svg w={16} h={16}>
              <path d="M13 6.5V1H1v12.5h5M1 7h6M7 1v6M7 7h5" strokeWidth="1.3" />
              <circle cx="11.3" cy="11.3" r="4.5" fill="#fff" stroke="none" /><path d="M11.3 9v4.6M9 11.3h4.6" stroke="#191919" strokeWidth="1.3" />
            </Svg>
            <span className="ml-[7px] w-[85px] text-[11.3px] font-medium text-white">Run new task</span>
            <div className="h-8 w-px bg-[#303030]" />
            <div className="ml-4 flex gap-1 *:h-[3px] *:w-[3px] *:rounded-full *:bg-white"><i /><i /><i /></div>
          </div>

          <div className="flex">
            <div className="mt-2 ml-1 w-[329px] shrink-0">
              {perf.map((p) => (
                <div key={p.name} className={`flex px-[10px] ${p.b ? 'h-[66px]' : 'h-[60px]'} ${p.on ? 'bg-[#282828]' : ''}`}>
                  <div className="pt-[10px]">{p.chart}</div>
                  <div className="flex flex-col pt-[6px] pl-[10px]">
                    <span className="text-[15.2px] leading-5 text-white">{p.name}</span>
                    <span className="leading-[15px] whitespace-pre">{p.a}</span>
                    <span className="leading-[15px] [word-spacing:0.6px]">{p.b}</span>
                  </div>
                </div>
              ))}
            </div>

            <div className="ml-[30px] w-[377px] shrink-0">
              <div className="flex h-[55px] items-start justify-between text-white">
                <span className="pt-[13px] text-[26.3px] leading-[38px]">Memory</span>
                <span className="pt-[24px] text-[15px] leading-6">64,0 GB</span>
              </div>
              <div className="-mt-[2px] flex h-[17px] items-center justify-between pb-[2px] text-[#c8c8c8]"><span>Memory usage</span><span>63,7 GB</span></div>
              <MemoryChart />
              <div className="flex h-[18px] items-center justify-between text-[#c8c8c8]"><span>60 seconds</span><span>0</span></div>
              <div className="flex h-5 items-center text-[#c8c8c8]">Memory composition</div>
              <div className="mt-px flex h-[52px] border border-[#5d92dd]">
                <div className="w-[214px] bg-[#0f1e35]" />
                <div className="w-[7px] border-x border-[#5d92dd]" />
                <div className="w-[91px] border-r border-[#5d92dd]" />
              </div>
              <div className="flex pt-6">
                <div className="flex w-[250px] shrink-0 flex-col">
                  <div className="flex h-[51px] *:shrink-0"><Stat w="w-[171px]" label="In use (Compressed)" value="36,3 GB (206 MB)" /><Stat w="w-20" label="Available" value="26,4 GB" /></div>
                  <div className="flex h-[51px] *:shrink-0"><Stat w="w-[132px]" label="Committed" value="44,4/74,2 GB" /><Stat w="w-20" label="Cached" value="16,5 GB" /></div>
                  <div className="flex h-[51px] *:shrink-0"><Stat w="w-[87px]" label="Paged pool" value="888 MB" /><Stat w="w-24" label="Non-paged pool" value="1009 MB" /></div>
                </div>
                <div className="flex flex-col">
                  {specs.map(([k, v]) => (
                    <div key={k} className="flex h-[18px]"><span className="w-[115px] text-[#c8c8c8]">{k}</span><span className="text-white">{v}</span></div>
                  ))}
                </div>
              </div>
            </div>
          </div>
        </div>
      </div>
    </div>
  );
}

export default function App() {
  return (
    <div className="relative h-[1379px] w-[2559px] overflow-hidden bg-black font-['Noto_Sans','Open_Sans',sans-serif]">
      <div className="flex h-[23px] items-center bg-[#f3f3f3] pl-[2px]">
        <div className="flex h-[15px] w-4 items-center justify-center rounded-[3px] bg-[#00005b] text-[9px] font-bold tracking-[-0.3px] text-[#a9a4ff]">Ae</div>
        <span className="ml-[6px] text-[11.35px] text-[#8b8b8b]">{'Adobe After Effects 2025 - C:\\Users\\AndyF\\Desktop\\Untitled Project.aep *'}</span>
      </div>
      <div className="flex h-5 items-center bg-white pl-[7px] text-[11.3px] text-[#5e5e5e]">
        {menus.map((m) => <span key={m.label} className={`shrink-0 ${m.w}`}>{m.label}</span>)}
      </div>
      <Toolbar />
      <div className="mt-[2px] flex h-[891px]">
        <ProjectPanel />
        <CompPanel />
        <div className="ml-1 flex flex-1 flex-col gap-1">
          <div className="h-[52px] bg-[#1d1d1d]" />
          <div className="flex-1 bg-[#1d1d1d]" />
        </div>
      </div>
      <Timeline />
      <TaskManager />
    </div>
  );
}
